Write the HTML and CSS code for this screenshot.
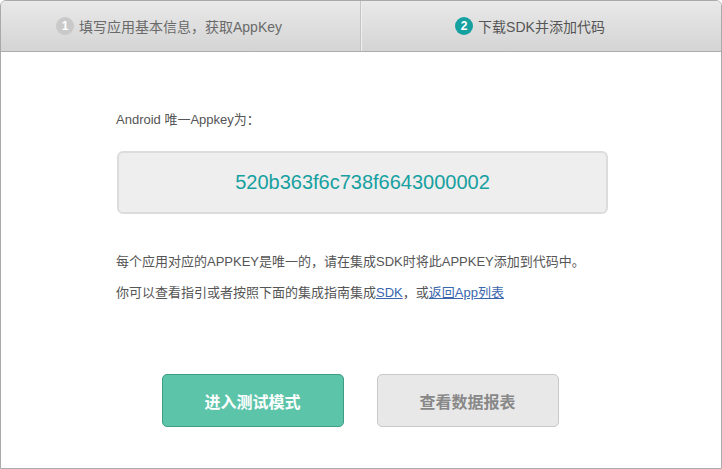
FILE: index.html
```html
<!DOCTYPE html>
<html lang="zh-CN">
<head>
  <meta charset="UTF-8">
  <meta name="viewport" content="width=device-width, initial-scale=1">
  <title>获取AppKey</title>
  <link rel="stylesheet" href="styles.css">
</head>
<body>

<div class="panel">
  <div class="steps">
    <div class="step">
      <span class="step-num">1</span>
      <span class="step-text">填写应用基本信息，获取AppKey</span>
    </div>
    <div class="step active">
      <span class="step-num">2</span>
      <span class="step-text">下载SDK并添加代码</span>
    </div>
  </div>

  <div class="content">
    <p class="key-label">Android 唯一Appkey为：</p>
    <div class="key-box">520b363f6c738f6643000002</div>

    <p class="tip">每个应用对应的APPKEY是唯一的，请在集成SDK时将此APPKEY添加到代码中。</p>
    <p class="tip">你可以查看指引或者按照下面的集成指南集成<a href="#">SDK</a>，或<a href="#">返回App列表</a></p>

    <div class="actions">
      <button class="btn btn-green">进入测试模式</button>
      <button class="btn btn-gray">查看数据报表</button>
    </div>
  </div>
</div>

</body>
</html>
```

FILE: styles.css
```css
* { box-sizing: border-box; }
body {
  font-family: "Liberation Sans", "Noto Sans CJK SC", sans-serif;
  background: #fff;
  margin: 0; padding: 0;
  color: #555;
}
.panel {
  width: 722px;
  height: 469px;
  border: 1px solid #aaa;
  border-radius: 6px 6px 0 0;
  background: #fff;
  overflow: hidden;
}

/* step tabs */
.steps {
  display: flex;
  height: 51px;
  background: linear-gradient(#e9e9e9, #d4d4d4);
  border-bottom: 1px solid #adadad;
}
.step {
  flex: 1;
  display: flex;
  align-items: center;
  justify-content: center;
  font-size: 14px;
  color: #6a6a6a;
  border-right: 1px solid #c4c4c4;
}
.step.active {
  border-right: none;
  border-left: 1px solid #efefef;
  color: #555;
}
.step-num {
  width: 18px;
  height: 18px;
  border-radius: 50%;
  background: #c9c9c9;
  color: #fff;
  font-size: 12px;
  font-weight: bold;
  line-height: 18px;
  text-align: center;
  margin-left: -23px;
  margin-right: 5px;
}
.step.active .step-num {
  background: #16a1a1;
}

/* body */
.content {
  padding: 58px 113px 0 115px;
}
.key-label {
  margin: 0;
  font-size: 13px;
  line-height: 20px;
  padding-left: 0;
}
.key-box {
  margin: 21px 0 0 1px;
  height: 63px;
  background: #eee;
  border: 2px solid #dcdcdc;
  border-radius: 6px;
  color: #16a0a0;
  font-size: 20px;
  line-height: 59px;
  text-align: center;
}
.tip {
  margin: 0;
  font-size: 13px;
  line-height: 20px;
}
.key-box + .tip {
  margin-top: 38px;
}
.tip + .tip {
  margin-top: 11px;
}
.tip a {
  color: #3a66ad;
  text-decoration: underline;
}

.actions {
  display: flex;
  justify-content: center;
  gap: 33px;
  margin-top: 71px;
  margin-left: -4px;
}
.btn {
  width: 182px;
  height: 53px;
  border-radius: 5px;
  font-family: inherit;
  font-size: 16px;
  font-weight: bold;
  cursor: pointer;
}
.btn-green {
  background: #5cc4a9;
  border: 1px solid #3e9d82;
  color: #fff;
}
.btn-gray {
  background: #e8e8e8;
  border: 1px solid #c9c9c9;
  color: #888;
}
```
